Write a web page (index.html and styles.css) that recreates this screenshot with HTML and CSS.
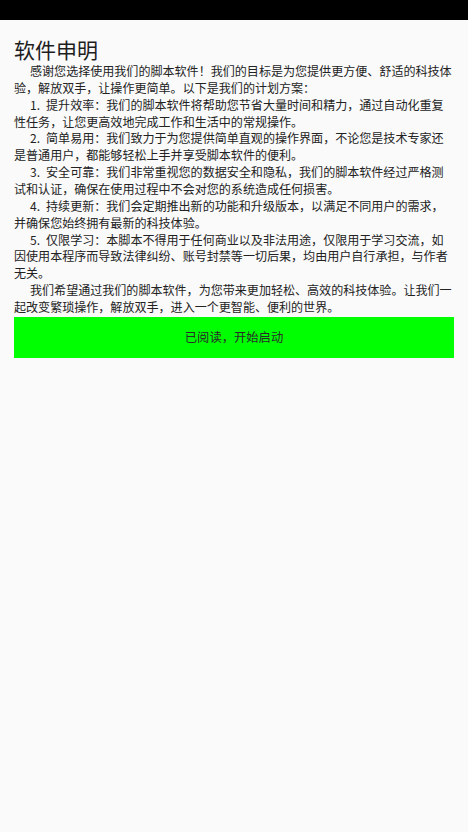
FILE: index.html
```html
<!DOCTYPE html>
<html lang="zh-CN">
<head>
<meta charset="utf-8">
<link rel="stylesheet" href="styles.css">
</head>
<body>
<div class="status-bar"></div>
<main class="content">
  <h1 class="title">软件申明</h1>
  <div class="body">
    <p class="para">感谢您选择使用我们的脚本软件！我们的目标是为您提供更方便、舒适的科技体验，解放双手，让操作更简单。以下是我们的计划方案：</p>
    <p class="para">1.&ensp;提升效率：我们的脚本软件将帮助您节省大量时间和精力，通过自动化重复性任务，让您更高效地完成工作和生活中的常规操作。</p>
    <p class="para">2.&ensp;简单易用：我们致力于为您提供简单直观的操作界面，不论您是技术专家还是普通用户，都能够轻松上手并享受脚本软件的便利。</p>
    <p class="para">3.&ensp;安全可靠：我们非常重视您的数据安全和隐私，我们的脚本软件经过严格测试和认证，确保在使用过程中不会对您的系统造成任何损害。</p>
    <p class="para">4.&ensp;持续更新：我们会定期推出新的功能和升级版本，以满足不同用户的需求，并确保您始终拥有最新的科技体验。</p>
    <p class="para">5.&ensp;仅限学习：本脚本不得用于任何商业以及非法用途，仅限用于学习交流，如因使用本程序而导致法律纠纷、账号封禁等一切后果，均由用户自行承担，与作者无关。</p>
    <p class="para">我们希望通过我们的脚本软件，为您带来更加轻松、高效的科技体验。让我们一起改变繁琐操作，解放双手，进入一个更智能、便利的世界。</p>
  </div>
  <button class="start-btn" type="button">已阅读，开始启动</button>
</main>
</body>
</html>
```

FILE: styles.css
```css
html, body {
  margin: 0;
  padding: 0;
  background: #fafafa;
  width: 468px;
  height: 832px;
  overflow: hidden;
}
body {
  font-family: "Noto Sans CJK SC", "Noto Sans", sans-serif;
  color: #212121;
}
.status-bar {
  height: 20px;
  background: #000;
}
.content {
  padding: 15px 14px 0 14px;
  display: flex;
  flex-direction: column;
}
.title {
  margin: 0;
  font-size: 21px;
  font-weight: normal;
  line-height: 28px;
  color: #1e1e1e;
}
.body {
  width: 440px;
}
.para {
  margin: 0;
  font-size: 12.05px;
  line-height: 16.86px;
  text-indent: 16px;
  color: #222;
}
.start-btn {
  margin-top: 1px;
  height: 41px;
  width: 440px;
  border: none;
  background: #00ff00;
  color: #2a2a2a;
  font-family: "Noto Sans CJK SC", "Noto Sans", sans-serif;
  font-size: 12.3px;
  padding: 0;
}
```
